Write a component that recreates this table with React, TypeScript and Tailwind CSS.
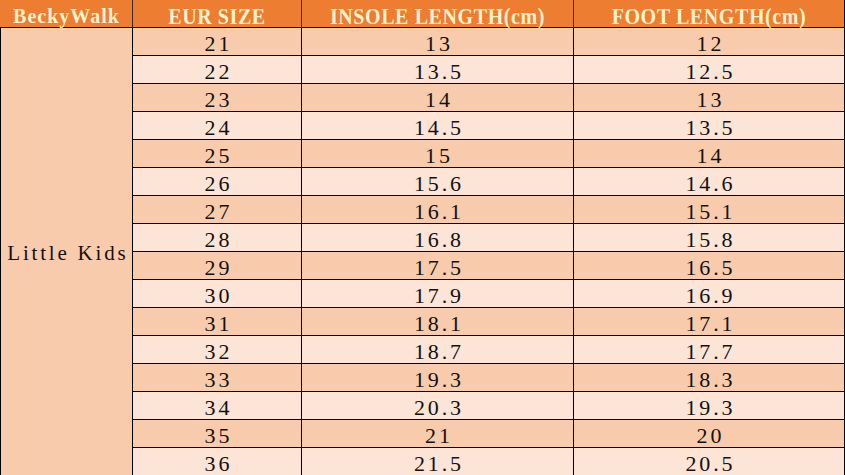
import React from "react";

const rows: [string, string, string][] = [
  ["21", "13", "12"],
  ["22", "13.5", "12.5"],
  ["23", "14", "13"],
  ["24", "14.5", "13.5"],
  ["25", "15", "14"],
  ["26", "15.6", "14.6"],
  ["27", "16.1", "15.1"],
  ["28", "16.8", "15.8"],
  ["29", "17.5", "16.5"],
  ["30", "17.9", "16.9"],
  ["31", "18.1", "17.1"],
  ["32", "18.7", "17.7"],
  ["33", "19.3", "18.3"],
  ["34", "20.3", "19.3"],
  ["35", "21", "20"],
  ["36", "21.5", "20.5"],
];

const serif = { fontFamily: '"Liberation Serif", "Times New Roman", serif' };

function Head({ children, border }: { children: React.ReactNode; border: string }) {
  return (
    <div className={`flex items-center justify-center bg-[#ED7D31] border-b border-b-black border-r ${border}`}>
      <span className="inline-block translate-y-[2px] scale-y-[1.12] font-bold text-[20px] leading-none text-[#FFF2CC] whitespace-pre tracking-[0.6px]">
        {children}
      </span>
    </div>
  );
}

function Cell({ v, dark }: { v: string; dark: boolean }) {
  return (
    <div
      className={`flex items-center justify-center border-b border-b-black border-r border-r-black ${dark ? "bg-[#F8CBAD]" : "bg-[#FCE4D6]"}`}
    >
      <span className="inline-block translate-y-[2px] text-[22px] leading-none text-[#111] tracking-[2.8px] pl-[2.8px]">{v}</span>
    </div>
  );
}

export default function App() {
  return (
    <div className="w-[845px] h-[475px] overflow-hidden bg-white" style={serif}>
      <div className="grid grid-cols-[133px_169px_272px_271px] grid-rows-[28px_repeat(16,28px)]">
        <div className="flex items-center justify-center bg-[#ED7D31] border-b border-b-black border-r border-r-[#3a2a20]">
          <span className="inline-block translate-y-[2px] font-bold text-[20px] leading-none text-[#FFF2CC] tracking-[1px] pl-[1px]">
            BeckyWalk
          </span>
        </div>
        <Head border="border-r-[#3a2a20]">EUR SIZE</Head>
        <Head border="border-r-[#3a2a20]">INSOLE LENGTH(cm)</Head>
        <Head border="border-r-black">FOOT LENGTH(cm)</Head>
        <div className="row-span-16 flex items-center justify-center bg-[#F8CBAD] border-l border-l-black border-r border-r-black">
          <span className="inline-block translate-y-[1px] text-[21px] leading-none text-[#111] whitespace-pre tracking-[2.8px] pl-[2.8px]">
            Little Kids
          </span>
        </div>
        {rows.map((r, i) => (
          <React.Fragment key={r[0]}>
            <Cell v={r[0]} dark={i % 2 === 0} />
            <Cell v={r[1]} dark={i % 2 === 0} />
            <Cell v={r[2]} dark={i % 2 === 0} />
          </React.Fragment>
        ))}
      </div>
    </div>
  );
}
